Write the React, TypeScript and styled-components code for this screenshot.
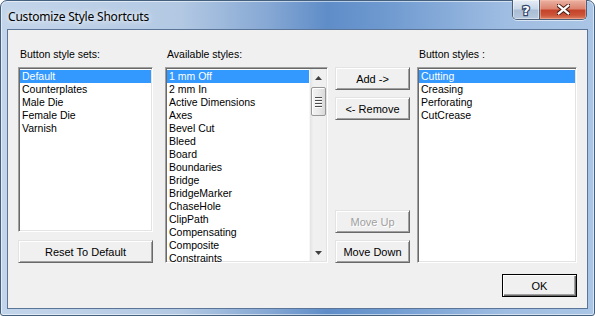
import React from "react";
import styled, { createGlobalStyle, css } from "styled-components";

const Global = createGlobalStyle`
  html, body { margin: 0; padding: 0; background: #ffffff; }
  body { width: 595px; height: 316px; overflow: hidden; }
  * { box-sizing: border-box; }
`;

const Window = styled.div`
  width: 595px;
  height: 316px;
  border: 1px solid #44607f;
  border-radius: 7px 7px 3px 3px;
  background: linear-gradient(90deg, #c3d5ea 0%, #b3c9e3 30%, #86a8d4 45%, #5f8dc8 55%, #6f9ad0 65%, #9fbde2 85%, #aac5e5 100%);
  padding: 0 6px 6px 6px;
  display: flex;
  flex-direction: column;
  box-shadow: inset 0 0 0 1px rgba(255, 255, 255, 0.55);
`;

const TitleBar = styled.div`
  height: 28px;
  display: flex;
  align-items: flex-start;
  flex-shrink: 0;
`;

const Title = styled.div`
  font-family: "Noto Sans", "Open Sans", sans-serif;
  font-size: 12px;
  color: #000;
  padding: 8px 0 0 1px;
  line-height: 15px;
  letter-spacing: -0.2px;
  text-shadow: 0 0 8px rgba(255, 255, 255, 0.9), 0 0 4px rgba(255, 255, 255, 0.9);
`;

const CaptionButtons = styled.div`
  margin-left: auto;
  margin-right: 1px;
  margin-top: -1px;
  display: flex;
  height: 20px;
  border: 1px solid #4c5f78;
  border-top: none;
  border-radius: 0 0 5px 5px;
  overflow: hidden;
  box-shadow: 0 1px 0 rgba(255, 255, 255, 0.6);
`;

const CaptionButton = styled.div<{ $close?: boolean }>`
  display: flex;
  align-items: center;
  justify-content: center;
  height: 100%;
  ${(p) =>
    p.$close
      ? css`
          width: 46px;
          background: linear-gradient(180deg, #eab2a4 0%, #dc8570 45%, #c4432b 55%, #cc5438 80%, #dc8166 100%);
          box-shadow: inset 0 0 0 1px rgba(255, 200, 180, 0.45);
        `
      : css`
          width: 27px;
          background: linear-gradient(180deg, #e6edf5 0%, #cbd8e8 45%, #aabdd4 55%, #b8c9de 100%);
          border-right: 1px solid #4c5f78;
          box-shadow: inset 0 0 0 1px rgba(255, 255, 255, 0.45);
        `}
`;

const HelpGlyph = styled.span`
  font-family: "DejaVu Sans", sans-serif;
  font-weight: bold;
  font-size: 13px;
  line-height: 13px;
  color: #ffffff;
  -webkit-text-stroke: 2.4px #34476a;
  paint-order: stroke fill;
  margin-top: 1px;
`;

const Client = styled.div`
  flex: 1;
  background: #f0f0f0;
  border: 1px solid #5a7597;
  padding: 18px 10px 0 10px;
  display: flex;
  flex-direction: column;
  font-family: "Liberation Sans", Arial, sans-serif;
  font-size: 10.5px;
  color: #000;
`;

const Columns = styled.div`
  display: flex;
  align-items: flex-start;
`;

const Column = styled.div<{ $w: number; $gap: number }>`
  width: ${(p) => p.$w}px;
  margin-left: ${(p) => p.$gap}px;
  display: flex;
  flex-direction: column;
  flex-shrink: 0;
`;

const Label = styled.div`
  height: 13px;
  line-height: 13px;
  margin-bottom: 6px;
  padding-left: 2px;
  white-space: nowrap;
`;

const ListBox = styled.div<{ $h: number }>`
  height: ${(p) => p.$h}px;
  background: #ffffff;
  border-style: solid;
  border-width: 1px;
  border-color: #a0a0a0 #ffffff #ffffff #a0a0a0;
  box-shadow: inset 1px 1px 0 #696969, inset -1px -1px 0 #e3e3e3;
  padding: 1px;
  display: flex;
  overflow: hidden;
`;

const Items = styled.div`
  flex: 1;
  display: flex;
  flex-direction: column;
  min-width: 0;
  padding-top: 1px;
`;

const Item = styled.div<{ $sel?: boolean }>`
  height: 13px;
  line-height: 13px;
  padding-left: 2px;
  white-space: nowrap;
  flex-shrink: 0;
  ${(p) =>
    p.$sel &&
    css`
      background: #3399ff;
      color: #ffffff;
    `}
`;

const ScrollBar = styled.div`
  width: 17px;
  background: linear-gradient(90deg, #e3e3e3 0%, #f0f0f0 20%, #f0f0f0 100%);
  border-left: 1px solid #f7f7f7;
  display: flex;
  flex-direction: column;
  align-items: center;
`;

const Arrow = styled.div`
  height: 17px;
  width: 100%;
  display: flex;
  align-items: center;
  justify-content: center;
  flex-shrink: 0;
`;

const Thumb = styled.div`
  width: 15px;
  height: 29px;
  margin-top: 1px;
  border: 1px solid #979797;
  border-radius: 2px;
  background: linear-gradient(90deg, #f4f4f4 0%, #e9e9e9 50%, #dadada 100%);
  box-shadow: inset 1px 1px 0 #ffffff;
  display: flex;
  flex-direction: column;
  align-items: center;
  justify-content: center;
  gap: 2px;
`;

const Grip = styled.div`
  width: 7px;
  height: 1px;
  background: #4d4d4d;
  box-shadow: 0 1px 0 #ffffff;
`;

const Spacer = styled.div<{ $fixed?: number }>`
  flex: ${(p) => (p.$fixed ? `0 0 ${p.$fixed}px` : "1")};
`;

const Button = styled.div<{ $disabled?: boolean; $default?: boolean; $mt?: number }>`
  height: 23px;
  margin-top: ${(p) => p.$mt ?? 0}px;
  display: flex;
  align-items: center;
  justify-content: center;
  background: #f0f0f0;
  border-style: solid;
  border-width: 1px;
  border-color: #e3e3e3 #696969 #696969 #e3e3e3;
  box-shadow: inset 1px 1px 0 #ffffff, inset -1px -1px 0 #a0a0a0;
  white-space: nowrap;
  flex-shrink: 0;
  font-size: 11px;
  ${(p) =>
    p.$disabled &&
    css`
      color: #a0a0a0;
      text-shadow: 1px 1px 0 #ffffff;
    `}
  ${(p) =>
    p.$default &&
    css`
      border-color: #000000;
      box-shadow: inset 1px 1px 0 #ffffff, inset -1px -1px 0 #696969, inset -2px -2px 0 #a0a0a0;
    `}
`;

const ButtonColumn = styled(Column)`
  height: 215px;
`;

const Footer = styled.div`
  display: flex;
  justify-content: flex-end;
  margin-top: 11px;
`;

const OkButton = styled(Button)`
  width: 75px;
`;

const sets = ["Default", "Counterplates", "Male Die", "Female Die", "Varnish"];
const available = [
  "1 mm Off",
  "2 mm In",
  "Active Dimensions",
  "Axes",
  "Bevel Cut",
  "Bleed",
  "Board",
  "Boundaries",
  "Bridge",
  "BridgeMarker",
  "ChaseHole",
  "ClipPath",
  "Compensating",
  "Composite",
  "Constraints",
];
const buttonStyles = ["Cutting", "Creasing", "Perforating", "CutCrease"];

const Triangle = ({ up }: { up?: boolean }) => (
  <svg width="7" height="4" viewBox="0 0 7 4">
    {up ? <path d="M0 4 L3.5 0 L7 4 Z" fill="#404040" /> : <path d="M0 0 L3.5 4 L7 0 Z" fill="#404040" />}
  </svg>
);

const CloseGlyph = () => (
  <svg width="13" height="11" viewBox="0 0 13 11">
    <path
      d="M1.5 1.5 L11.5 9.5 M11.5 1.5 L1.5 9.5"
      stroke="#4a1d14"
      strokeWidth="4.2"
      strokeLinecap="round"
      fill="none"
    />
    <path d="M1.8 1.7 L11.2 9.3 M11.2 1.7 L1.8 9.3" stroke="#ffffff" strokeWidth="2.3" strokeLinecap="square" fill="none" />
  </svg>
);

export default function App() {
  return (
    <>
      <Global />
      <Window>
        <TitleBar>
          <Title>Customize Style Shortcuts</Title>
          <CaptionButtons>
            <CaptionButton>
              <HelpGlyph>?</HelpGlyph>
            </CaptionButton>
            <CaptionButton $close>
              <CloseGlyph />
            </CaptionButton>
          </CaptionButtons>
        </TitleBar>
        <Client>
          <Columns>
            <Column $w={135} $gap={0}>
              <Label>Button style sets:</Label>
              <ListBox $h={165}>
                <Items>
                  {sets.map((s, i) => (
                    <Item key={s} $sel={i === 0}>
                      {s}
                    </Item>
                  ))}
                </Items>
              </ListBox>
              <Button $mt={8}>Reset To Default</Button>
            </Column>
            <Column $w={163} $gap={12}>
              <Label>Available styles:</Label>
              <ListBox $h={196}>
                <Items>
                  {available.map((s, i) => (
                    <Item key={s} $sel={i === 0}>
                      {s}
                    </Item>
                  ))}
                </Items>
                <ScrollBar>
                  <Arrow>
                    <Triangle up />
                  </Arrow>
                  <Thumb>
                    <Grip />
                    <Grip />
                    <Grip />
                    <Grip />
                  </Thumb>
                  <Spacer />
                  <Arrow>
                    <Triangle />
                  </Arrow>
                </ScrollBar>
              </ListBox>
            </Column>
            <ButtonColumn $w={75} $gap={7}>
              <Spacer $fixed={19} />
              <Button>Add -&gt;</Button>
              <Button $mt={7}>&lt;- Remove</Button>
              <Spacer />
              <Button $disabled>Move Up</Button>
              <Button $mt={7}>Move Down</Button>
            </ButtonColumn>
            <Column $w={160} $gap={7}>
              <Label>Button styles :</Label>
              <ListBox $h={196}>
                <Items>
                  {buttonStyles.map((s, i) => (
                    <Item key={s} $sel={i === 0}>
                      {s}
                    </Item>
                  ))}
                </Items>
              </ListBox>
            </Column>
          </Columns>
          <Footer>
            <OkButton $default>OK</OkButton>
          </Footer>
        </Client>
      </Window>
    </>
  );
}
